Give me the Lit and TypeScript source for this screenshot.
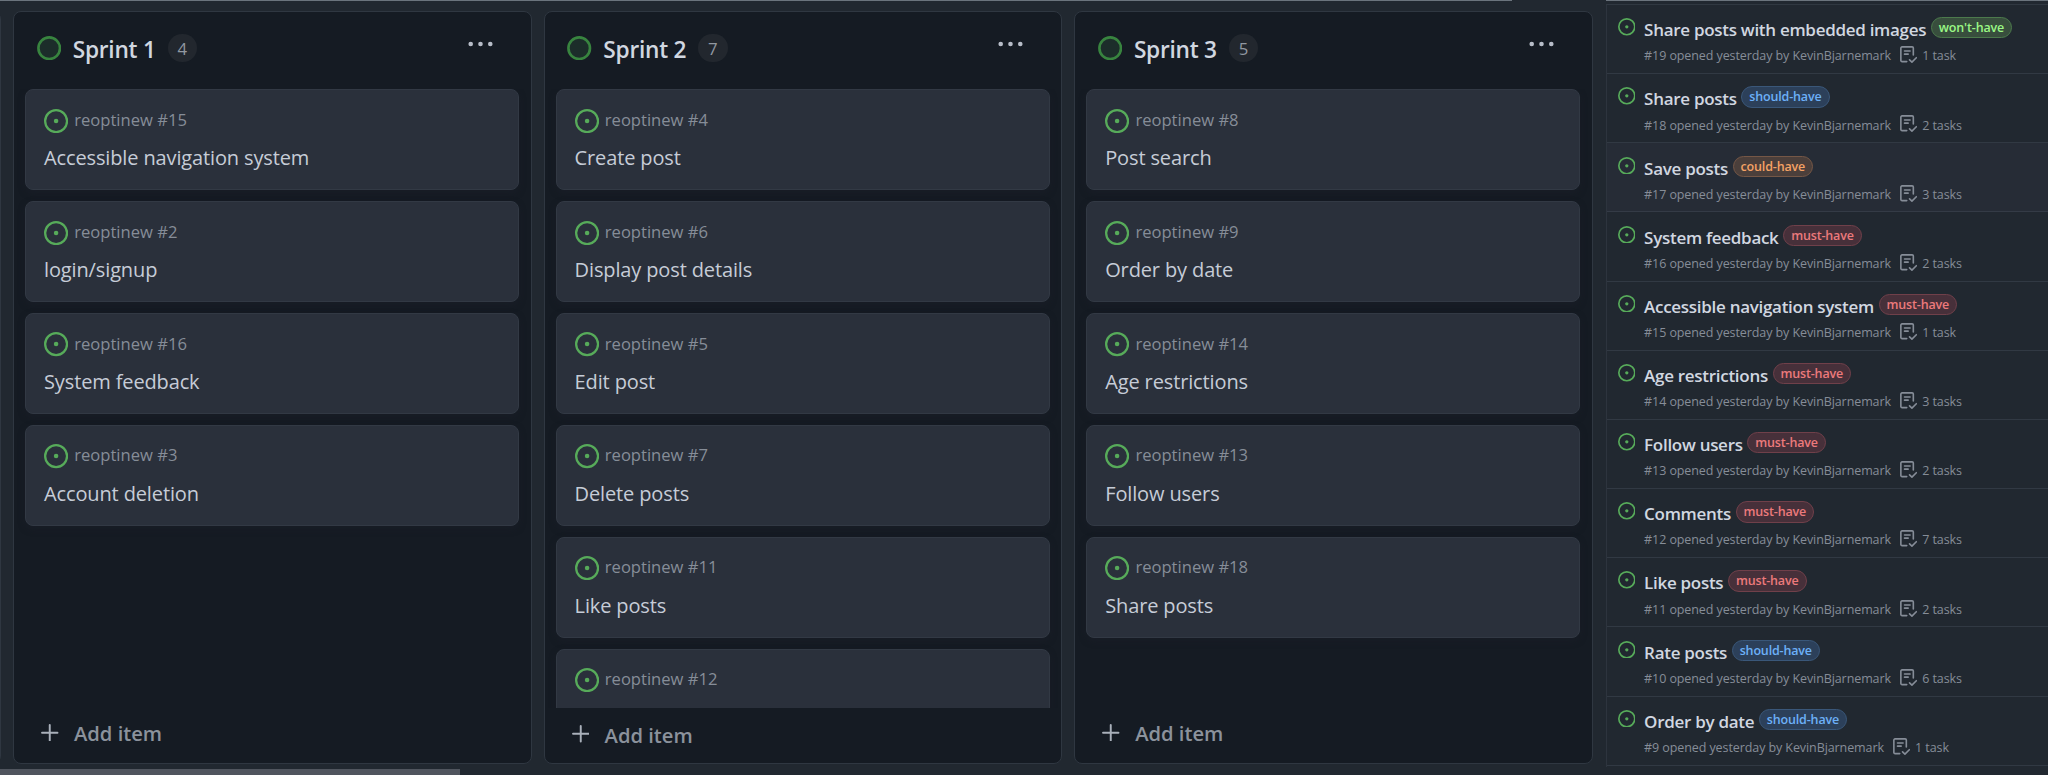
import { LitElement, html, css, nothing } from "lit";
import { customElement, property } from "lit/decorators.js";

type Card = [number, string];
type Issue = [number, string, string, number];

const openIcon = html`<svg class="open" viewBox="0 0 16 16">
  <circle cx="8" cy="8" r="7.25" fill="none" stroke="currentColor" stroke-width="1.5" />
  <circle cx="8" cy="8" r="1.5" fill="currentColor" />
</svg>`;

@customElement("sprint-column")
export class SprintColumn extends LitElement {
  @property() name = "";
  @property({ type: Number }) count = 0;
  @property({ attribute: false }) cards: Card[] = [];

  static styles = css`
    :host {
      display: flex;
      flex-direction: column;
      flex: none;
      box-sizing: border-box;
      width: 518.6px;
      height: 752.4px;
      border: 1.3px solid #2f3741;
      border-radius: 8px;
      background: #151b23;
      overflow: hidden;
    }
    header {
      display: flex;
      align-items: center;
      flex: none;
      height: 77px;
      padding: 0 38px 6px 22.8px;
      box-sizing: border-box;
    }
    .state { width: 24.4px; height: 24.4px; flex: none; display: block; }
    h2 {
      margin: 4px 0 0 11.5px;
      font-size: 22.7px;
      font-weight: 600;
      line-height: 32px;
      letter-spacing: -0.25px;
      color: #d1d7e0;
      white-space: nowrap;
    }
    .count {
      margin-left: 12px;
      height: 28.5px;
      width: 29.3px;
      border-radius: 15px;
      background: #22272e;
      color: #9198a1;
      font-size: 16.8px;
      line-height: 30px;
      text-align: center;
    }
    .dots { margin-left: auto; width: 25px; height: 6px; margin-top: -7px; fill: #b7bdc8; }
    .list {
      flex: 1;
      min-height: 0;
      overflow: hidden;
      display: flex;
      flex-direction: column;
      gap: 10.9px;
      padding: 0 11.5px 0 11px;
    }
    .card {
      flex: none;
      box-sizing: border-box;
      height: 101px;
      border: 1.2px solid #323944;
      border-radius: 8px;
      background: #2a303b;
      padding: 16.4px 18px 0;
      box-shadow: 0 3px 6px rgba(26, 30, 40, 0.6);
    }
    .ref {
      display: flex;
      align-items: center;
      gap: 6px;
      height: 28px;
      color: #868d98;
      font-size: 16.6px;
      line-height: 22px;
      white-space: nowrap;
    }
    .ref span { margin-top: -2px; }
    .open { width: 24.2px; height: 24.2px; flex: none; color: #57ab5a; }
    .title {
      margin-top: 10.6px;
      color: #c6ccd7;
      font-size: 20px;
      line-height: 26px;
      letter-spacing: -0.13px;
      white-space: nowrap;
    }
    footer {
      flex: none;
      display: flex;
      align-items: center;
      gap: 15.5px;
      height: 54.4px;
      box-sizing: border-box;
      padding: 0 0 1px 27px;
      color: #8b929c;
      font-size: 20.2px;
      font-weight: 560;
      line-height: 26px;
      letter-spacing: -0.02px;
    }
    footer.short { height: 56.4px; padding-bottom: 2.5px; }
    .plus { width: 17.5px; height: 17.5px; margin-top: -2px; stroke: #a9b0ba; stroke-width: 1.9; stroke-linecap: round; }
  `;

  render() {
    const overflowing = this.count > 5;
    return html`
      <header>
        <svg class="state" viewBox="0 0 24 24">
          <circle cx="12" cy="12" r="10.6" fill="#1c2d2a" stroke="#38843f" stroke-width="2.6" />
        </svg>
        <h2>${this.name}</h2>
        <span class="count">${this.count}</span>
        <svg class="dots" viewBox="0 0 25 6">
          <circle cx="2.7" cy="3" r="2.3" /><circle cx="12.5" cy="3" r="2.3" /><circle cx="22.3" cy="3" r="2.3" />
        </svg>
      </header>
      <div class="list">
        ${this.cards.map(
          ([id, title]) => html`<div class="card">
            <div class="ref">${openIcon}<span>reoptinew #${id}</span></div>
            ${title ? html`<div class="title">${title}</div>` : nothing}
          </div>`
        )}
      </div>
      <footer class=${overflowing ? "" : "short"}>
        <svg class="plus" viewBox="0 0 17 17"><path d="M8.5 1V16M1 8.5H16" /></svg>
        <span>Add item</span>
      </footer>
    `;
  }
}

@customElement("issue-row")
export class IssueRow extends LitElement {
  @property({ attribute: false }) issue!: Issue;

  static styles = css`
    :host {
      display: flex;
      gap: 9px;
      box-sizing: border-box;
      height: 69.17px;
      padding: 13.2px 0 0 11px;
      border-bottom: 1px solid #313943;
    }
    .open { width: 17.6px; height: 17.6px; flex: none; color: #57ab5a; }
    .line { display: flex; align-items: flex-start; height: 22px; }
    .name {
      color: #d1d7e0;
      font-size: 17px;
      font-weight: 600;
      line-height: 23.4px;
      letter-spacing: -0.29px;
      white-space: nowrap;
    }
    .tag {
      box-sizing: border-box;
      height: 21.3px;
      margin: -1px 0 0 4.6px;
      padding: 0 7px;
      border: 1px solid;
      border-radius: 11px;
      font-size: 12.5px;
      font-weight: 600;
      line-height: 19px;
      letter-spacing: -0.16px;
      white-space: nowrap;
    }
    .must-have { color: #ec7a7c; background: #47303a; border-color: #70404a; }
    .should-have { color: #6cb0f8; background: #2c405a; border-color: #3a5779; }
    .could-have { color: #f5a265; background: #4b3f3b; border-color: #755746; }
    .wont-have { color: #9bf885; background: #384e3d; border-color: #4c7a4c; }
    .meta {
      display: flex;
      align-items: center;
      height: 20px;
      margin-top: 5.7px;
      color: #868d98;
      font-size: 12.5px;
      letter-spacing: -0.09px;
      white-space: nowrap;
    }
    .tasks { width: 17.2px; height: 17.2px; margin: -2px 5px 0 9px; fill: none; stroke: #868d98; stroke-width: 1.5; stroke-linecap: round; stroke-linejoin: round; }
  `;

  render() {
    const [id, title, tag, n] = this.issue;
    return html`
      ${openIcon}
      <div>
        <div class="line">
          <span class="name">${title}</span>
          <span class="tag ${tag.replace("'", "")}">${tag}</span>
        </div>
        <div class="meta">
          <span>#${id} opened yesterday by KevinBjarnemark</span>
          <svg class="tasks" viewBox="0 0 16 16">
            <path d="M12.4 8.4V1.9A1.1 1.1 0 0 0 11.3 .8H1.9A1.1 1.1 0 0 0 .8 1.9V13.4A1.1 1.1 0 0 0 1.9 14.5H6.3M4.2 4.6H9.4M4.2 7.6H7.6M8.9 12.9L11.1 15L15.2 10.9" />
          </svg>
          <span>${n} ${n === 1 ? "task" : "tasks"}</span>
        </div>
      </div>
    `;
  }
}

@customElement("app-root")
export class AppRoot extends LitElement {
  static styles = css`
    :host {
      display: flex;
      flex-direction: column;
      width: 2048px;
      height: 775px;
      overflow: hidden;
      background: #212830;
      font-family: "Open Sans", "Noto Sans", sans-serif;
    }
    .edge { flex: none; display: flex; height: 1px; }
    .edge i { background: #6b747d; width: 1512px; }
    .edge i + i { margin-left: 94px; width: 442px; }
    main { flex: 1; display: flex; min-height: 0; }
    .board { width: 1605.5px; flex: none; display: flex; gap: 12px; padding-top: 10.4px; box-sizing: border-box; overflow: hidden; }
    .previous {
      flex: none;
      box-sizing: border-box;
      width: 24px;
      height: 752.4px;
      margin-left: -23px;
      border: 1.3px solid #2f3741;
      border-radius: 8px;
    }
    .issues {
      flex: 1;
      height: 761.8px;
      margin-top: 3px;
      border-top: 1px solid #303841;
      border-left: 1px solid #2d343e;
    }
    .hovered { background: #262c36; border-bottom-color: #343b46; }
    .scroll { flex: none; height: 6px; }
    .thumb { width: 460px; height: 6px; background: #50555e; }
  `;

  private sprints: { name: string; count: number; cards: Card[] }[] = [
    { name: "Sprint 1", count: 4, cards: [[15, "Accessible navigation system"], [2, "login/signup"], [16, "System feedback"], [3, "Account deletion"]] },
    { name: "Sprint 2", count: 7, cards: [[4, "Create post"], [6, "Display post details"], [5, "Edit post"], [7, "Delete posts"], [11, "Like posts"], [12, ""]] },
    { name: "Sprint 3", count: 5, cards: [[8, "Post search"], [9, "Order by date"], [14, "Age restrictions"], [13, "Follow users"], [18, "Share posts"]] },
  ];

  private issues: Issue[] = [
    [19, "Share posts with embedded images", "won't-have", 1],
    [18, "Share posts", "should-have", 2],
    [17, "Save posts", "could-have", 3],
    [16, "System feedback", "must-have", 2],
    [15, "Accessible navigation system", "must-have", 1],
    [14, "Age restrictions", "must-have", 3],
    [13, "Follow users", "must-have", 2],
    [12, "Comments", "must-have", 7],
    [11, "Like posts", "must-have", 2],
    [10, "Rate posts", "should-have", 6],
    [9, "Order by date", "should-have", 1],
  ];

  render() {
    return html`
      <div class="edge"><i></i><i></i></div>
      <main>
        <div class="board">
          <div class="previous"></div>
          ${this.sprints.map((s) => html`<sprint-column .name=${s.name} .count=${s.count} .cards=${s.cards}></sprint-column>`)}
        </div>
        <div class="issues">
          ${this.issues.map((issue) => html`<issue-row class=${issue[0] === 17 ? "hovered" : ""} .issue=${issue}></issue-row>`)}
        </div>
      </main>
      <div class="scroll"><div class="thumb"></div></div>
    `;
  }
}
